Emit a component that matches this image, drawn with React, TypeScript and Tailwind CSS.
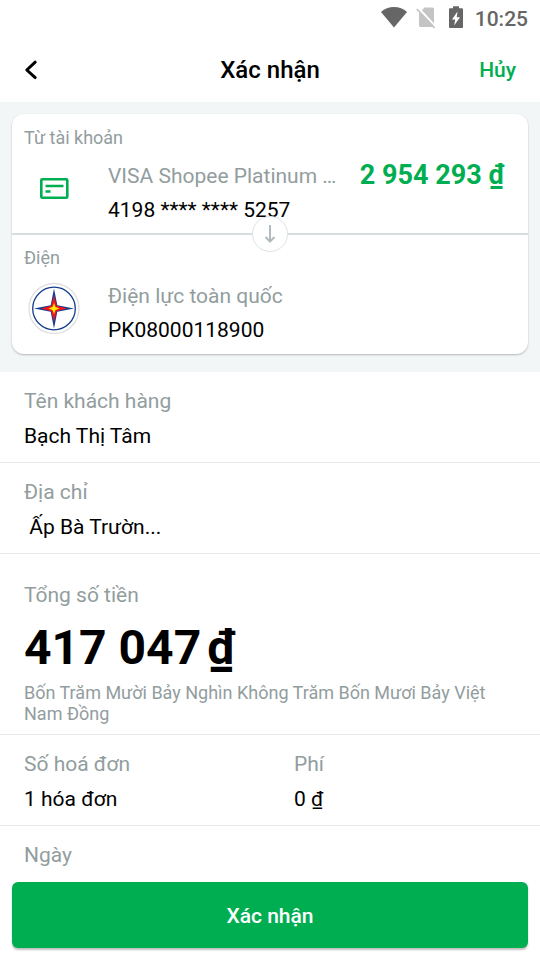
import type { ReactNode } from "react";

function StatusBar() {
  return (
    <div className="flex h-9 shrink-0 items-start justify-end pt-1.5 pr-3 text-[#666666]">
      <svg aria-hidden="true" className="h-6 w-7" viewBox="0 0 28 24" fill="currentColor">
        <path d="M14 21.500 L1 6 C4.500 2.700 9 1 14 1 C19 1 23.500 2.700 27 6 Z" />
      </svg>
      <svg aria-hidden="true" className="ml-2 h-6 w-5" viewBox="0 0 20 24">
        <path d="M8.500 1.500 H16.500 Q18 1.500 18 3 V19.500 Q18 21 16.500 21 H4.500 Q3 21 3 19.500 V7.500 Z" fill="#c4c4c4" />
        <path d="M2 1.500 L20 21" stroke="#ffffff" strokeWidth="2" />
        <path d="M0.800 3 L18.500 21.800" stroke="#c4c4c4" strokeWidth="1.800" />
      </svg>
      <svg aria-hidden="true" className="ml-3 h-6 w-4" viewBox="0 0 16 24">
        <path d="M5 0.200 H11 V2.200 H14 Q15 2.200 15 3.200 V21 Q15 22 14 22 H2 Q1 22 1 21 V3.200 Q1 2.200 2 2.200 H5 Z" fill="#666666" />
        <path d="M9.500 5.500 L4 13.500 H7.200 L6.200 19.500 L12 11.200 H8.700 Z" fill="#ffffff" />
      </svg>
      <span className="ml-[11px] text-[21px] leading-[26px] font-medium">10:25</span>
    </div>
  );
}

function Header() {
  return (
    <header className="grid h-[66px] shrink-0 grid-cols-[1fr_auto_1fr] items-center px-6 pt-0.5">
      <button type="button" aria-label="Quay lại" className="justify-self-start">
        <svg className="h-6 w-4" viewBox="0 0 16 24" fill="none" stroke="#000000" strokeWidth="3" strokeLinecap="round" strokeLinejoin="round">
          <path d="M11.200 4.200 L2.800 12 L11.200 19.600" />
        </svg>
      </button>
      <h1 className="text-2xl font-medium">Xác nhận</h1>
      <button type="button" className="justify-self-end text-[21px] leading-7 font-medium text-[#00ae52]">
        Hủy
      </button>
    </header>
  );
}

function CardIcon() {
  return (
    <svg aria-hidden="true" className="h-13 w-13" viewBox="0 0 52 52">
      <rect x="13.300" y="17.300" width="26" height="18.500" rx="1" fill="none" stroke="#00ae52" strokeWidth="2.600" />
      <path d="M17.500 24 H35.500 M17.500 29.500 H22.500" stroke="#00ae52" strokeWidth="2.500" />
    </svg>
  );
}

function PowerLogo() {
  return (
    <svg aria-hidden="true" className="h-13 w-13" viewBox="0 0 52 52">
      <circle cx="26" cy="26.500" r="25" fill="#ffffff" stroke="#e0e0e0" strokeWidth="1.300" />
      <g transform="translate(0 0.500)">
        <circle cx="26" cy="26" r="21.300" fill="#ffffff" stroke="#143d8d" strokeWidth="1.300" />
        <path d="M26 6 L29.300 22.700 L46 26 L29.300 29.300 L26 46 L22.700 29.300 L6 26 L22.700 22.700 Z" fill="#143d8d" />
        <path d="M26 13 L28.700 23.300 L39 26 L28.700 28.700 L26 39 L23.300 28.700 L13 26 L23.300 23.300 Z" fill="#f5141c" />
        <path d="M26 20.500 L27.500 24.500 L31.500 26 L27.500 27.500 L26 31.500 L24.500 27.500 L20.500 26 L24.500 24.500 Z" fill="#ffee00" />
      </g>
    </svg>
  );
}

type PartyProps = { label: string; icon: ReactNode; name: string; number: string; amount?: string };

function Party({ label, icon, name, number, amount }: PartyProps) {
  return (
    <section className="pt-[13px] pr-6 pb-[10px] pl-3">
      <h2 className="text-lg leading-[21px] text-[#929d9e]">{label}</h2>
      <div className="mt-[14px] flex">
        <div className="ml-1 shrink-0">{icon}</div>
        <div className="ml-7 flex min-w-0 flex-1 flex-col gap-1.5 text-[21px] leading-7">
          <p className="truncate text-[#929d9e]">{name}</p>
          <p>{number}</p>
        </div>
        {amount && (
          <p className="shrink-0 text-[27px] leading-[26px] font-bold text-[#00ae52]">{amount}</p>
        )}
      </div>
    </section>
  );
}

function Field({ label, value }: { label: string; value?: string }) {
  return (
    <div className="flex flex-1 flex-col gap-[7px] px-6 pt-[15px] pb-3 text-[21px] leading-7">
      <dt className="text-[#929d9e]">{label}</dt>
      {value && <dd className="whitespace-pre">{value}</dd>}
    </div>
  );
}

export default function App() {
  return (
    <div className="flex h-dvh flex-col bg-white font-[Roboto,sans-serif] text-black">
      <StatusBar />
      <Header />
      <main className="min-h-0 flex-1 overflow-y-auto">
        <div className="bg-[#f2f6f7] px-3 pt-3 pb-[18px]">
          <div className="relative rounded-xl bg-white shadow-[0_1px_2px_rgba(0,0,0,0.25)]">
            <Party
              label="Từ tài khoản"
              icon={<CardIcon />}
              name="VISA Shopee Platinum …"
              number="4198 **** **** 5257"
              amount="2 954 293 ₫"
            />
            <div className="absolute inset-x-0 top-1/2 flex -translate-y-1/2 items-center">
              <span className="h-0.5 flex-1 bg-[#d8dde0]" />
              <span className="flex size-9 items-center justify-center rounded-full border border-[#dfe3e5] bg-white">
                <svg aria-hidden="true" className="h-5 w-3" viewBox="0 0 12 20" fill="none" stroke="#b0bbbf" strokeWidth="2">
                  <path d="M6 1 V18 M1.500 13 L6 17.500 L10.500 13" />
                </svg>
              </span>
              <span className="h-0.5 flex-1 bg-[#d8dde0]" />
            </div>
            <Party label="Điện" icon={<PowerLogo />} name="Điện lực toàn quốc" number="PK08000118900" />
          </div>
        </div>

        <dl>
          <div className="flex border-b border-[#e8e8e8]">
            <Field label="Tên khách hàng" value="Bạch Thị Tâm" />
          </div>
          <div className="flex border-b border-[#e8e8e8]">
            <Field label="Địa chỉ" value=" Ấp Bà Trườn..." />
          </div>
          <div className="border-b border-[#e8e8e8] px-6 pt-[27px] pb-[10px]">
            <dt className="text-[21px] leading-7 text-[#929d9e]">Tổng số tiền</dt>
            <dd className="mt-[11px] flex gap-1.5 text-5xl leading-14 font-bold">
              <span>417 047</span>
              <span>₫</span>
            </dd>
            <dd className="mt-1.5 text-lg leading-[21px] text-[#929d9e]">
              Bốn Trăm Mười Bảy Nghìn Không Trăm Bốn Mươi Bảy Việt Nam Đồng
            </dd>
          </div>
          <div className="flex border-b border-[#e8e8e8]">
            <Field label="Số hoá đơn" value="1 hóa đơn" />
            <Field label="Phí" value="0 ₫" />
          </div>
          <div className="flex">
            <Field label="Ngày" />
          </div>
        </dl>
      </main>
      <footer className="shrink-0 px-3 pb-3">
        <button
          type="button"
          className="h-[66px] w-full rounded-md bg-[#00ae52] pt-0.5 text-[21px] leading-7 font-medium text-white shadow-[0_2px_2px_rgba(0,0,0,0.25)]"
        >
          Xác nhận
        </button>
      </footer>
    </div>
  );
}
